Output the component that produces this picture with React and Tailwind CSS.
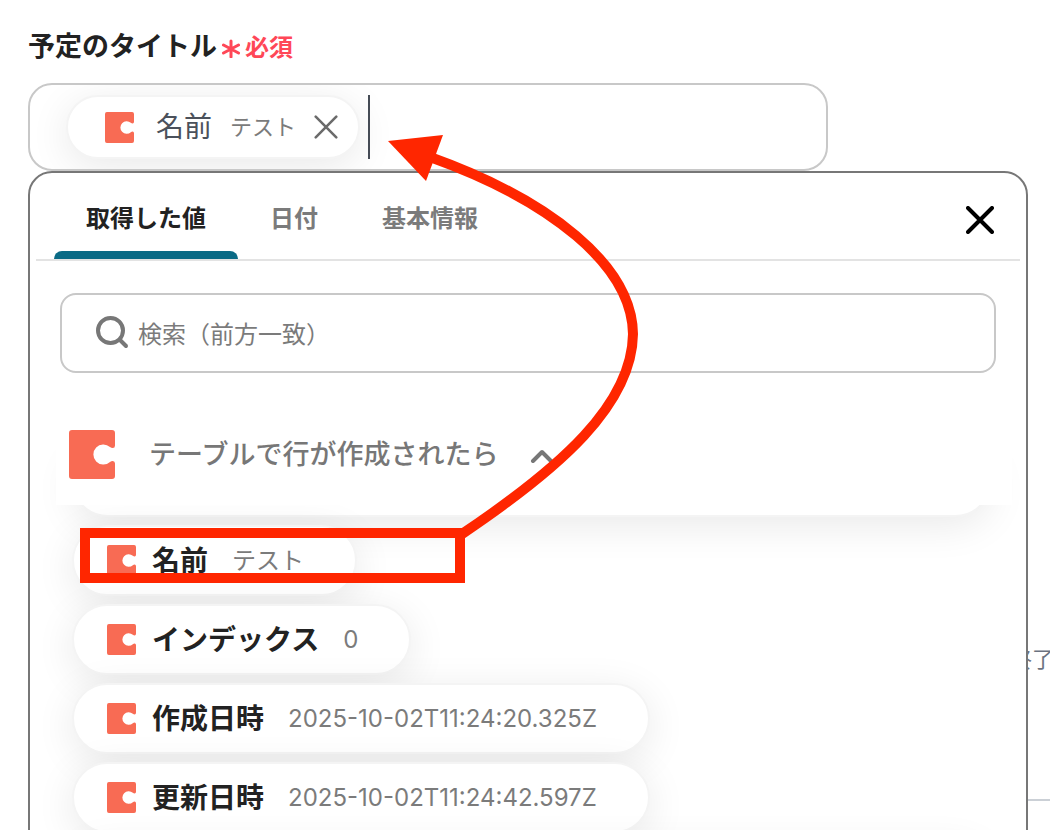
import React, { useState } from 'react';

const TABS = ['取得した値', '日付', '基本情報'];

const ITEMS = [
    { id: 'name', label: '名前', value: 'テスト' },
    { id: 'index', label: 'インデックス', value: '0' },
    { id: 'created', label: '作成日時', value: '2025-10-02T11:24:20.325Z' },
    { id: 'updated', label: '更新日時', value: '2025-10-02T11:24:42.597Z' },
];

const pillCls = 'rounded-full border-2 border-[#f4f4f4] bg-white shadow-[0_8px_40px_rgba(0,0,0,0.09)]';

function TableLogo({ className }) {
    return (
        <svg className={className} viewBox="0 0 46 49" fill="#f86b54" aria-hidden="true">
            <path d="M3 0H43Q46 0 46 3V15.5Q46 18 43.8 18Q42.2 18 41 17A10 10 0 1 0 41 32Q42.2 31 43.8 31Q46 31 46 33.5V46Q46 49 43 49H3Q0 49 0 46V3Q0 0 3 0Z" />
        </svg>
    );
}

function Cross({ className, width }) {
    return (
        <svg className={className} viewBox="0 0 28 28" fill="none" stroke="currentColor" strokeWidth={width} strokeLinecap="round" aria-hidden="true">
            <path d="M2 2L26 26M26 2L2 26" />
        </svg>
    );
}

function ValueItem({ label, value }) {
    return (
        <li>
            <button type="button" className={`flex h-[71px] items-center pl-[33px] pr-[51px] ${pillCls}`}>
                <TableLogo className="h-[31px] w-[29px]" />
                <span className="ml-4 text-[28px] font-bold text-[#222]">{label}</span>
                <span className="ml-6 text-2xl text-[#7b7b7b]">{value}</span>
            </button>
        </li>
    );
}

// 選択した値が入力欄へ入る流れを示す注釈
function Annotation() {
    return (
        <svg className="pointer-events-none absolute left-0 top-0 z-30" width="700" height="600" viewBox="0 0 700 600" fill="none" aria-hidden="true">
            <rect x="85" y="533" width="375" height="45" stroke="#ff2600" strokeWidth="10" />
            <path d="M462 534C560 468 632 405 633 334C632 265 550 200 430 157" stroke="#ff2600" strokeWidth="10" />
            <path d="M388 141L443 135L426 181Z" fill="#ff2600" />
        </svg>
    );
}

export default function App() {
    const [tab, setTab] = useState(TABS[0]);
    const [text, setText] = useState('');
    const [query, setQuery] = useState('');

    return (
        <div className="relative flex h-screen flex-col overflow-hidden bg-white font-['Inter','Noto_Sans_CJK_JP',sans-serif]" lang="ja">
            <div className="flex h-[83px] items-center gap-1 px-7 pt-3">
                <label htmlFor="title" className="text-[27px] font-bold text-[#222]">予定のタイトル</label>
                <span className="flex items-center gap-1 text-2xl font-bold text-[#ff4757]">
                    <svg className="size-5" viewBox="0 0 20 20" stroke="currentColor" strokeWidth="3" strokeLinecap="round" aria-hidden="true">
                        <path d="M10 3V19M2.500 7L17.500 15M17.500 7L2.500 15" />
                    </svg>
                    必須
                </span>
            </div>

            <div className="relative ml-7 mr-[22px]">
                <div className="mr-[200px] flex h-[88px] items-center overflow-hidden rounded-3xl border-2 border-[#c8c8c8] pl-9">
                    <div className={`flex h-16 shrink-0 items-center pl-[37px] pr-5 ${pillCls}`}>
                        <TableLogo className="h-[31px] w-[29px]" />
                        <span className="ml-[22px] text-[28px] text-[#4b515b]">名前</span>
                        <span className="ml-[18px] text-[22px] text-[#7b7b7b]">テスト</span>
                        <button type="button" aria-label="削除" className="ml-[18px] text-[#6b6b6b]">
                            <Cross className="size-6" width={3} />
                        </button>
                    </div>
                    <span className="ml-2 h-16 w-0.5 shrink-0 bg-[#454b55]" />
                    <input id="title" value={text} onChange={e => setText(e.target.value)} className="h-16 min-w-0 flex-1 px-2 text-2xl outline-none" />
                </div>

                {/* 値を選ぶドロップダウン */}
                <div className="absolute inset-x-0 top-full z-10 flex h-[700px] flex-col overflow-hidden rounded-3xl border-2 border-[#777] bg-white">
                    <div className="mx-1.5 flex h-[88px] shrink-0 items-stretch border-b-2 border-[#e3e3e3] pl-[18px]">
                        <div role="tablist" className="flex">
                            {TABS.map(t => (
                                <button key={t} type="button" role="tab" aria-selected={tab === t} onClick={() => setTab(t)}
                                    className={`flex flex-col items-center justify-between text-2xl font-bold ${tab === t ? 'text-[#222]' : 'text-[#7b7b7b]'}`}>
                                    <span className="px-8 pt-[30px]">{t}</span>
                                    <span className={`h-2 w-full rounded-t-lg ${tab === t ? 'bg-[#0a6a85]' : ''}`} />
                                </button>
                            ))}
                        </div>
                        <button type="button" aria-label="閉じる" className="ml-auto mr-[26px] mt-2 text-black">
                            <Cross className="size-7" width={4} />
                        </button>
                    </div>

                    <div className="mx-[30px] mt-8 flex h-20 shrink-0 items-center gap-2 rounded-2xl border-2 border-[#c8c8c8] pl-8">
                        <svg className="size-9 shrink-0" viewBox="0 0 36 36" fill="none" stroke="#777" strokeWidth="4" strokeLinecap="round" aria-hidden="true">
                            <circle cx="16.500" cy="15.500" r="12.500" />
                            <path d="M26 25L32 31" />
                        </svg>
                        <input type="search" aria-label="検索" placeholder="検索（前方一致）" value={query} onChange={e => setQuery(e.target.value)}
                            className="h-full min-w-0 flex-1 pt-0.5 text-2xl outline-none placeholder:text-[#7b7b7b]" />
                    </div>

                    <div className="relative z-10 ml-[26px] mr-3.5 mt-[30px] flex h-[102px] shrink-0 items-center bg-white pl-[13px]">
                        <TableLogo className="h-[49px] w-[46px]" />
                        <button type="button" aria-expanded="true" className="ml-[34px] flex items-center gap-8 pt-0.5 text-[27px] font-medium text-[#777]">
                            テーブルで行が作成されたら
                            <svg className="h-4 w-6" viewBox="0 0 24 16" fill="none" stroke="currentColor" strokeWidth="4" strokeLinecap="round" strokeLinejoin="round" aria-hidden="true">
                                <path d="M3 14L12 5L21 14" />
                            </svg>
                        </button>
                    </div>

                    <ul className="-mt-[59px] ml-[42px] mr-[35px] flex flex-col gap-2">
                        <li className={`h-[71px] shrink-0 ${pillCls}`} />
                        {ITEMS.map(it => <ValueItem key={it.id} label={it.label} value={it.value} />)}
                        <li className={`h-[71px] shrink-0 ${pillCls}`} />
                    </ul>
                </div>
            </div>

            <div className="ml-7 mt-[472px] flex h-[158px] shrink-0 justify-end border-b-2 border-[#cbd0d6] text-[22px] text-[#6b7280]">
                <span className="-mr-1">終了</span>
            </div>

            <Annotation />
        </div>
    );
}
